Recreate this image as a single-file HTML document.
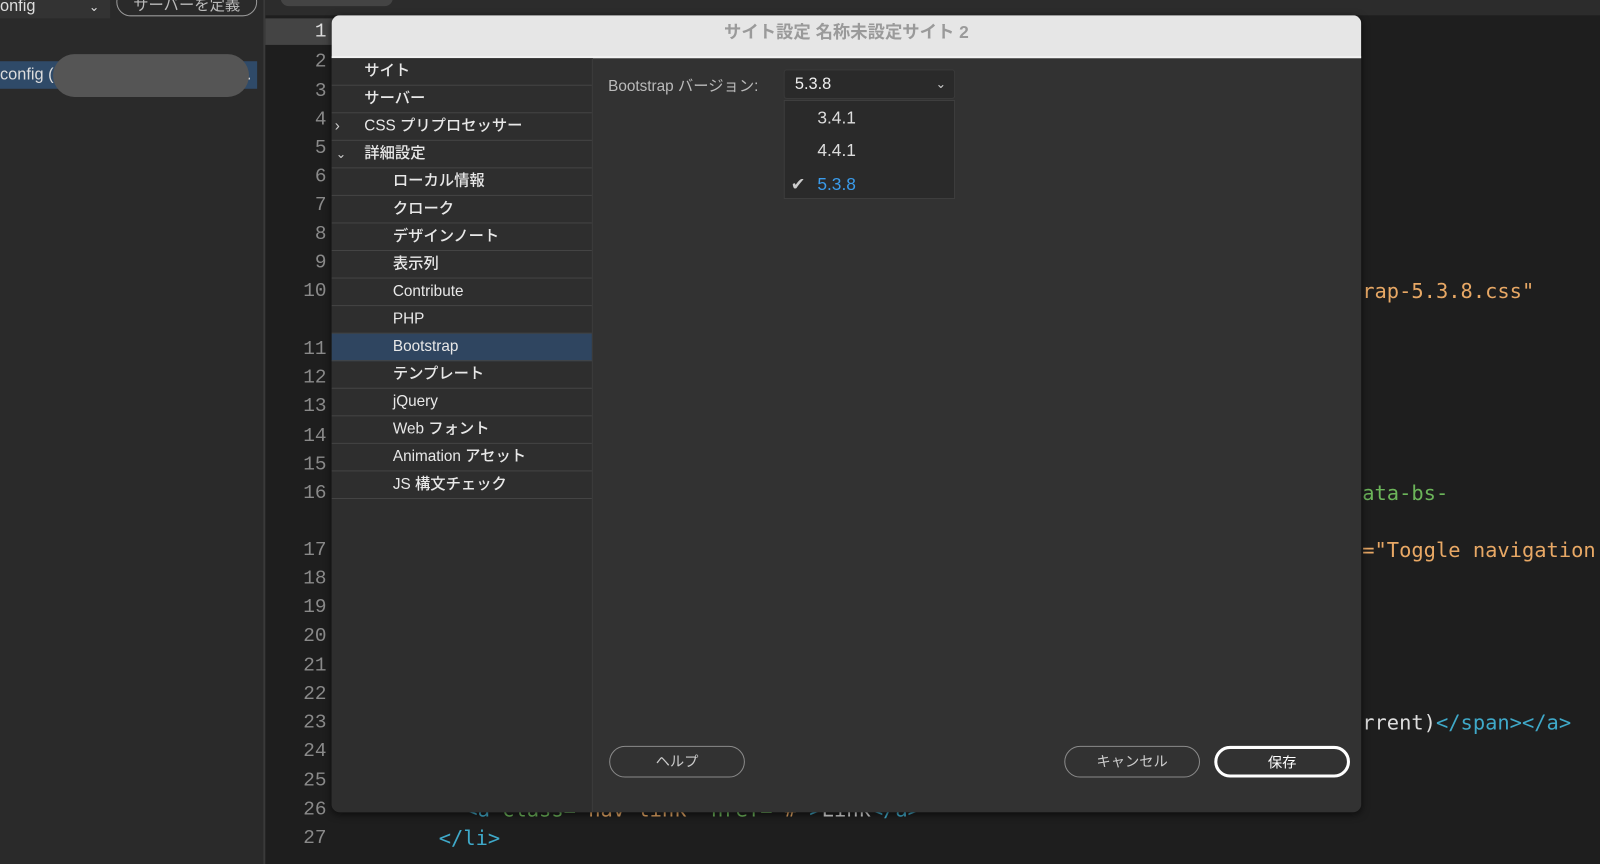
<!DOCTYPE html>
<html><head><meta charset="utf-8"><style>
*{margin:0;padding:0;box-sizing:border-box}
html,body{width:1600px;height:847px;overflow:hidden;background:#1e1e1e}
body{font-family:"Liberation Sans","Noto Sans CJK JP",sans-serif;color:#ddd}
#w{position:absolute;left:0;top:0;width:1568px;height:830px;transform:scale(1.0204);transform-origin:0 0}
.abs{position:absolute}
.ln{position:absolute;left:262px;width:58px;text-align:right;font-family:"Liberation Mono",monospace;font-size:19px;color:#8a8a8a}
.code{position:absolute;font-family:"DejaVu Sans Mono","Liberation Mono",monospace;font-size:20px;white-space:pre}
.side div{height:27px;border-bottom:1px solid #444;font-size:15px;line-height:26px;color:#e8e8e8;position:relative;font-weight:500}
.btn{position:absolute;height:31px;border:1.5px solid #8a8a8a;border-radius:16px;text-align:center;line-height:28px;font-size:14px;color:#ccc}
</style></head><body><div id="w">
<div class="abs" style="left:0;top:0;width:258px;height:847px;background:#2a2a2a"></div>
<div class="abs" style="left:0;top:0;width:108px;height:18px;background:#333;font-size:16px;line-height:14px;color:#ddd">onfig <span style="margin-left:48px;font-size:12px">⌄</span></div>
<div class="abs" style="left:114px;top:-12px;width:138px;height:28px;border:1.5px solid #999;border-radius:14px;font-size:15px;color:#bbb;text-align:center;line-height:34px">サーバーを定義</div>
<div class="abs" style="left:0;top:60px;width:252px;height:27px;background:#2f4a68;font-size:16px;line-height:27px;color:#ddd">config (<span style="position:absolute;left:242px">.</span></div>
<div class="abs" style="left:52px;top:53px;width:192px;height:42px;border-radius:21px;background:#555"></div>
<div class="abs" style="left:258px;top:0;width:2px;height:847px;background:#3a3a3a"></div>
<div class="abs" style="left:260px;top:0;width:1340px;height:15px;background:#2c2c2c"></div>
<div class="abs" style="left:275px;top:-10px;width:110px;height:16px;border-radius:8px;background:#444"></div>
<div class="abs" style="left:260px;top:18px;width:70px;height:26px;background:#444"></div>
<div class="ln" style="top:20px;color:#ddd">1</div>
<div class="ln" style="top:49px">2</div><div class="ln" style="top:78px">3</div><div class="ln" style="top:106px">4</div><div class="ln" style="top:134px">5</div><div class="ln" style="top:162px">6</div><div class="ln" style="top:190px">7</div><div class="ln" style="top:218px">8</div><div class="ln" style="top:246px">9</div><div class="ln" style="top:274px">10</div><div class="ln" style="top:331px">11</div><div class="ln" style="top:359px">12</div><div class="ln" style="top:387px">13</div><div class="ln" style="top:416px">14</div><div class="ln" style="top:444px">15</div><div class="ln" style="top:472px">16</div><div class="ln" style="top:528px">17</div><div class="ln" style="top:556px">18</div><div class="ln" style="top:584px">19</div><div class="ln" style="top:612px">20</div><div class="ln" style="top:641px">21</div><div class="ln" style="top:669px">22</div><div class="ln" style="top:697px">23</div><div class="ln" style="top:725px">24</div><div class="ln" style="top:754px">25</div><div class="ln" style="top:782px">26</div><div class="ln" style="top:810px">27</div>
<div class="code" style="left:1335px;top:273px;color:#e8a865">rap-5.3.8.css"</div>
<div class="code" style="left:1335px;top:471px;color:#6cb55a">ata-bs-</div>
<div class="code" style="left:1335px;top:527px;color:#e8a865">="Toggle navigation</div>
<div class="code" style="left:1335px;top:696px;color:#ddd">rrent)<span style="color:#3fa9c9">&lt;/span&gt;&lt;/a&gt;</span></div>
<div class="code" style="left:456px;top:781px;color:#e8a865"><span style="color:#3fa9c9">&lt;a</span> <span style="color:#6cb55a">class=</span>"nav-link" <span style="color:#6cb55a">href=</span>"#"<span style="color:#3fa9c9">&gt;</span><span style="color:#ddd">Link</span><span style="color:#3fa9c9">&lt;/a&gt;</span></div>
<div class="code" style="left:430px;top:809px;color:#3fa9c9">&lt;/li&gt;</div>
<div class="abs" style="left:325px;top:15px;width:1009px;height:781px;background:#323232;border-radius:8px;overflow:hidden;box-shadow:0 2px 8px rgba(0,0,0,.6)">
 <div class="abs" style="left:0;top:0;width:1009px;height:42px;background:#e6e6e6;border-bottom:2px solid #f2f2f2;text-align:center;font-size:17px;font-weight:bold;color:#9a9a9a;line-height:34px">サイト設定 名称未設定サイト 2</div>
 <div class="abs side" style="left:0;top:42px;width:256px;height:739px;background:#2e2e2e;border-right:1px solid #3c3c3c">
  <div style="padding-left:32px">サイト</div>
  <div style="padding-left:32px">サーバー</div>
  <div style="padding-left:32px"><span style="position:absolute;left:3px;color:#ccc">›</span>CSS プリプロセッサー</div>
  <div style="padding-left:32px"><span style="position:absolute;left:4px;color:#ccc;font-size:12px">⌄</span>詳細設定</div>
  <div style="padding-left:60px">ローカル情報</div>
  <div style="padding-left:60px">クローク</div>
  <div style="padding-left:60px">デザインノート</div>
  <div style="padding-left:60px">表示列</div>
  <div style="padding-left:60px">Contribute</div>
  <div style="padding-left:60px">PHP</div>
  <div style="padding-left:60px;background:#2f4560">Bootstrap</div>
  <div style="padding-left:60px">テンプレート</div>
  <div style="padding-left:60px">jQuery</div>
  <div style="padding-left:60px">Web フォント</div>
  <div style="padding-left:60px">Animation アセット</div>
  <div style="padding-left:60px">JS 構文チェック</div>
 </div>
 <div class="abs" style="left:271px;top:58px;font-size:15px;color:#bbb">Bootstrap バージョン:</div>
 <div class="abs" style="left:443px;top:53px;width:168px;height:29px;background:#2a2a2a;border:1px solid #3a3a3a;border-radius:3px;font-size:16px;line-height:27px;padding-left:10px;color:#eee">5.3.8<span style="position:absolute;right:8px;font-size:12px;color:#ccc">⌄</span></div>
 <div class="abs" style="left:443px;top:83px;width:168px;height:97px;background:#2a2a2a;border:1px solid #3e3e3e;font-size:17px;color:#ddd">
  <div class="abs" style="left:32px;top:7px">3.4.1</div>
  <div class="abs" style="left:32px;top:39px">4.4.1</div>
  <div class="abs" style="left:32px;top:72px;color:#3a9bea"><span style="position:absolute;left:-26px;color:#ccc">✔</span>5.3.8</div>
 </div>
 <div class="btn" style="left:272px;top:716px;width:133px">ヘルプ</div>
 <div class="btn" style="left:718px;top:716px;width:133px">キャンセル</div>
 <div class="btn" style="left:865px;top:716px;width:133px;border:3px solid #fff;color:#fff;line-height:26px">保存</div>
</div>
</div></body></html>
